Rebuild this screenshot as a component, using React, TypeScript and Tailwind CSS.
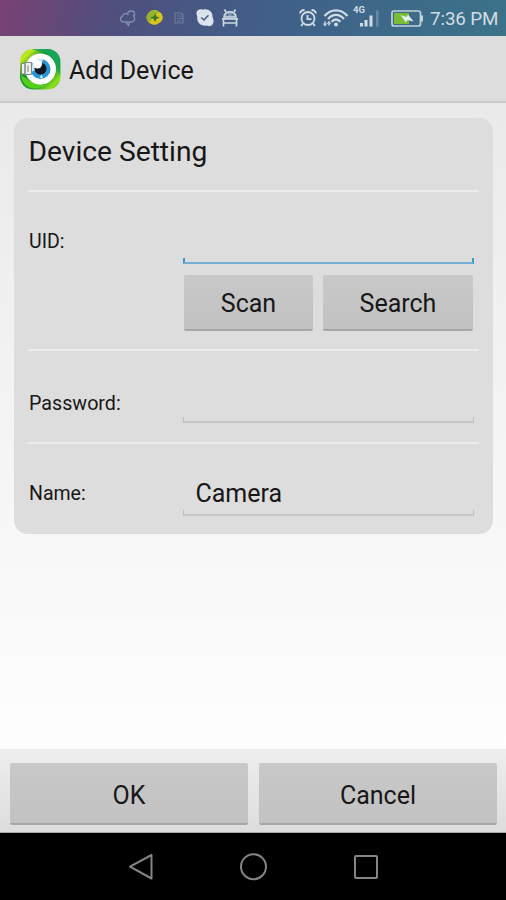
import type { ReactNode } from "react";

function StatusBar() {
  return (
    <div className="flex h-9 shrink-0 items-center bg-linear-[100deg,#784273_0%,#504f7e_22%,#3f6089_55%,#3b7389_100%] pl-[119px] text-[#d3dce5]">
      <svg className="mr-[9px] h-[36px] w-[18px]" viewBox="0 0 18 36" fill="none" stroke="#8190ad" strokeWidth="1.3">
        <path d="M5 22C1 22 .5 17.500 3.500 16.200C4 13.200 8 12.800 9.500 15M5 22H12.500C15.500 21.500 16.500 18.500 15 16" />
        <path d="M8.500 13.500C9 10.300 15 10 15.600 13.500C15.800 15 15 16 14 16.500M7 22.500L9.500 25.500L10.500 22.500" />
      </svg>
      <svg className="mr-[10px] h-[36px] w-[18px]" viewBox="0 0 18 36">
        <path d="M.5 17C2 12 6 9 11 10.500L15 13C18 17 17 21 13 23C9 26.500 4 24.500 1.500 21Z" fill="#d8c51f" />
        <path d="M.5 17C2 10.500 10 9 13 12L8 16L4 22C1.500 21 .5 19 .5 17Z" fill="#91b62d" />
        <path d="M9.500 13.500L10.500 16.500L14 17.500L10.500 19L9 22L7.500 19L4 17.500L7.500 16.500Z" fill="#417724" />
      </svg>
      <svg className="mr-[10px] h-[36px] w-[12px]" viewBox="0 0 12 36" fill="none" stroke="#6c7b99" strokeWidth="1.200">
        <path d="M1 13H7L9 15V23H1ZM3 16H8M3 18.500H9M3 21H7" />
      </svg>
      <svg className="mr-[7px] h-[36px] w-[18px]" viewBox="0 0 18 36">
        <path d="M.5 14C0 10 4 8.500 7 9.700C12 8 17 12 16.500 17C19.500 23 15.500 28 11 25.500C5 26.500 .5 23 1.300 17Z" fill="#dce3ec" />
        <path d="M5.200 17.500L8 20L12.500 15.300" fill="none" stroke="#456086" strokeWidth="1.600" />
      </svg>
      <svg className="mr-[60px] h-[36px] w-[18px]" viewBox="0 0 18 36" fill="none" stroke="#ccd7e3" strokeWidth="1.700">
        <path d="M3.500 9.500L5 12M14.500 9.500L13 12" />
        <path d="M3 17C2.800 10.200 15.200 10.200 15 17Z" fill="#ccd7e3" fillOpacity=".5" />
        <path d="M1 18.800H17M2.500 18V26.500M15.500 18V26.500M3 23H15" />
        <circle cx="6.500" cy="14.800" r="1" fill="#48638a" stroke="none" />
        <circle cx="11.500" cy="14.800" r="1" fill="#48638a" stroke="none" />
      </svg>
      <svg className="mr-[6px] h-[36px] w-[18px]" viewBox="0 0 18 36" fill="none" stroke="currentColor" strokeWidth="1.800">
        <circle cx="9" cy="18.500" r="6.500" />
        <path d="M1 13.500C1.500 11 3.500 10 5.500 10M17 13.500C16.500 11 14.500 10 12.500 10M3.800 23.500L2.200 26M14.200 23.500L15.800 26M8.500 15V19.200H12.500" />
      </svg>
      <svg className="mr-[4px] h-[36px] w-[26px]" viewBox="0 0 26 36" fill="none" stroke="currentColor" strokeWidth="2.200">
        <path d="M1.500 16C8 8.500 18 8.500 24.500 16M5 19C10 13.500 16 13.500 21 19M8.500 21.700C11.500 18.800 14.500 18.800 17.500 21.700" />
        <circle cx="13" cy="24.600" r="2" fill="currentColor" stroke="none" />
        <path d="M2 21.500V25.500M6 25.500V21.500" strokeWidth="1.500" />
        <path d="M.3 23.500L2 25.800L3.800 23.500M4.200 23.800L6 21.500L7.800 23.800" strokeWidth="1" />
      </svg>
      <div className="mr-[11px] flex h-9 w-[27px] items-start">
        <span className="mt-[5px] w-[7px] font-[Roboto,sans-serif] text-[9.500px] leading-[10px] font-bold">4G</span>
        <svg className="h-[36px] w-[20px]" viewBox="0 0 20 36" fill="currentColor">
          <path d="M-.5 23H3V26.500H-.5ZM4.500 20H7.500V26.500H4.500ZM9.500 15.500H12.500V26.500H9.500Z" />
          <path d="M16 10.500H18.500V26.500H16Z" opacity=".3" />
        </svg>
      </div>
      <svg className="mr-[6px] h-[36px] w-[33px]" viewBox="0 0 33 36">
        <rect x="1" y="11" width="28.500" height="15" rx="2" fill="none" stroke="#c4d2dc" strokeWidth="1.700" />
        <path d="M30 15.500H32V21.500H30Z" fill="#c4d2dc" />
        <path d="M3 13H18V24H3Z" fill="#79bd37" />
        <path d="M9.500 15L15.500 17L17 14.500L22.500 21.500L16.500 20L15 22.500Z" fill="#e8f0ef" />
      </svg>
      <span className="pt-[2px] font-[Roboto,sans-serif] text-[18.800px] leading-[34px] tracking-[-0.1px] whitespace-nowrap">7:36 PM</span>
    </div>
  );
}

function AppIcon() {
  return (
    <svg className="mt-px h-[42px] w-[42px]" viewBox="0 0 42 42">
      <defs>
        <linearGradient id="leaf" x1="0" y1="0" x2="1" y2="1">
          <stop offset="0" stopColor="#6fbd27" />
          <stop offset=".15" stopColor="#c3ec19" />
          <stop offset=".35" stopColor="#16902f" />
          <stop offset=".7" stopColor="#2bab2e" />
          <stop offset=".86" stopColor="#93df16" />
          <stop offset="1" stopColor="#119545" />
        </linearGradient>
      </defs>
      <rect x="1" y="1" width="40.500" height="40.500" rx="13" fill="url(#leaf)" />
      <path d="M13 1.300H29C36 2 41 6 41 14V27L36 15L27 5Z" fill="#14a557" />
      <path d="M2 27C3 36 9 40.500 17 40.500L27 38L11 33Z" fill="#55ce1c" />
      <circle cx="21.500" cy="21" r="15.500" fill="#fff" />
      <circle cx="21.500" cy="21" r="10" fill="#2796d9" />
      <path d="M12 24C11 15 18 10.500 24 11L21 20Z" fill="#c5eafa" />
      <circle cx="21.500" cy="20.700" r="6" fill="#111820" />
      <circle cx="18.500" cy="16" r="4.500" fill="#fff" />
      <path d="M20.500 30L22.500 26L24 30Z" fill="#b8e6fa" />
      <g fill="#eef0ed" stroke="#7c8880" strokeWidth="1">
        <path d="M2.500 15.500H6V26H2.500ZM6 14.500H12.500V26.500H6Z" />
        <path d="M9 17.500V24" />
      </g>
    </svg>
  );
}

function Field({ active = false, value, label }: { active?: boolean; value: string; label: string }) {
  return (
    <div className={`flex h-[44px] w-[291px] flex-col justify-end ${active ? "text-[#4099cb]" : "text-[#bdbdbd]"}`}>
      <input
        aria-label={label}
        defaultValue={value}
        className="h-[38px] w-full bg-transparent px-[12.500px] pt-[4px] font-[Roboto,sans-serif] text-[25px] leading-[34px] text-[#171717] outline-none"
      />
      <div className={`h-[6px] border-x border-current ${active ? "border-x-2 border-b-2 border-b-[#74aed2]" : "border-b-2 border-b-[#c6c6c6]"}`} />
    </div>
  );
}

function GreyButton({ children, size }: { children: ReactNode; size: string }) {
  return (
    <button className={`${size} rounded-[2px] border-b-2 border-[#a6a6a6] bg-linear-to-b from-[#c8c8c8] to-[#c2c2c2] text-[25px] leading-none`}>
      {children}
    </button>
  );
}

function Divider() {
  return <div className="h-[2px] shrink-0 bg-[#ececec]" />;
}

export default function App() {
  return (
    <main className="flex h-[900px] w-[506px] flex-col overflow-hidden bg-white font-[Roboto,sans-serif] text-[#171717]">
      <StatusBar />
      <header className="flex h-[67px] shrink-0 items-center border-b-2 border-[#c9c9c9] bg-[#dddddd] pl-[19px]">
        <AppIcon />
        <h1 className="ml-[8px] pt-[4px] text-[25px] leading-[30px] whitespace-nowrap">Add Device</h1>
      </header>
      <section className="h-[646px] shrink-0 bg-linear-to-b from-[#eaeaea] via-[#f6f6f6] via-60% to-[#fefefe] px-[14px] pt-[15px]">
        <div className="flex h-[416px] w-[478.500px] flex-col rounded-[14px] bg-[#dddddd] px-[14px]">
          <h2 className="h-[72px] pt-[17px] pl-[0.5px] text-[28.200px] leading-[34px] whitespace-nowrap">Device Setting</h2>
          <Divider />
          <div className="flex h-[72px] items-end">
            <label className="w-[155px] pb-[10px] pl-px text-[19.500px] leading-[24px]">UID:</label>
            <Field active label="UID" value="" />
          </div>
          <div className="flex h-[85px] gap-[10px] pt-[11px] pl-[156px]">
            <GreyButton size="h-[56px] w-[129px] shrink-0 pt-[3px]">Scan</GreyButton>
            <GreyButton size="h-[56px] w-[150px] shrink-0 pt-[3px]">Search</GreyButton>
          </div>
          <Divider />
          <div className="flex h-[72px] items-end">
            <label className="w-[155px] pb-[7px] pl-px text-[19.700px] leading-[24px]">Password:</label>
            <Field label="Password" value="" />
          </div>
          <div className="h-[19px]" />
          <Divider />
          <div className="flex h-[72px] items-end">
            <label className="w-[155px] pb-[10px] pl-px text-[19.500px] leading-[24px]">Name:</label>
            <Field label="Name" value="Camera" />
          </div>
        </div>
      </section>
      <footer className="flex h-[84px] shrink-0 gap-[11px] border-b border-[#aaa] bg-linear-to-b from-[#eeeeee] to-[#dddddd] px-[10px] pt-[14px]">
        <GreyButton size="h-[62px] w-[238px] shrink-0 pt-[5px]">OK</GreyButton>
        <GreyButton size="h-[62px] w-[238px] shrink-0 pt-[5px]">Cancel</GreyButton>
      </footer>
      <nav className="flex h-[67px] shrink-0 justify-center gap-[84px] bg-black pt-[19px]">
        <svg className="h-[28px] w-[28px]" viewBox="0 0 28 28" fill="none" stroke="#858585" strokeWidth="2">
          <path d="M24.500 3V26.500L3 14.700Z" strokeLinejoin="round" />
        </svg>
        <svg className="h-[30px] w-[28px]" viewBox="0 0 28 30" fill="none" stroke="#858585" strokeWidth="2">
          <circle cx="14.500" cy="14.700" r="12.500" />
        </svg>
        <svg className="h-[28px] w-[28px]" viewBox="0 0 28 28" fill="none" stroke="#858585" strokeWidth="2">
          <rect x="4" y="4" width="22" height="22" rx="1" />
        </svg>
      </nav>
    </main>
  );
}
